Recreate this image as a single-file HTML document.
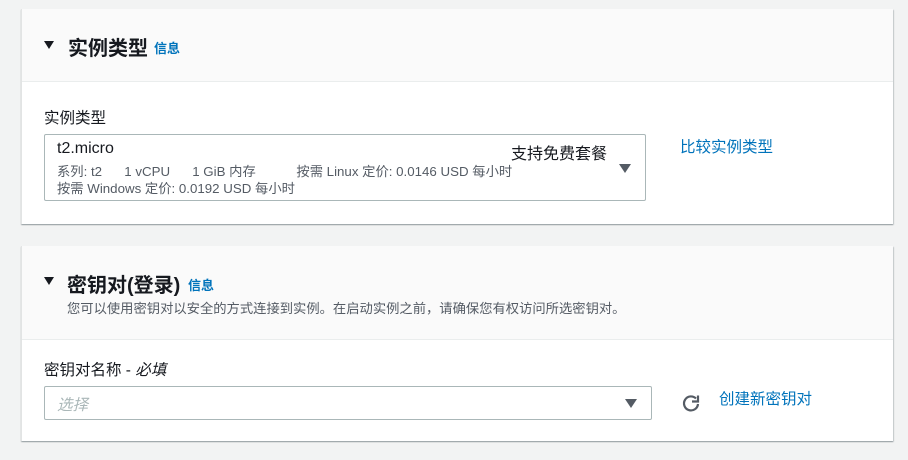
<!DOCTYPE html>
<html><head><meta charset="utf-8"><style>
body{margin:0;width:908px;height:460px;background:#f2f3f3;position:relative;overflow:hidden;font-family:"Liberation Sans","Noto Sans CJK SC",sans-serif;color:#16191f}
.card{position:absolute;left:21px;width:871px;background:#fff;border-left:1px solid #e2e4e4;box-shadow:0 1px 1px rgba(0,28,36,.3),1px 1px 1px rgba(0,28,36,.15)}
.hd{background:#fafafa;border-bottom:1px solid #eaeded;position:relative}
.a{position:absolute;white-space:nowrap}
.tri{width:0;height:0;border-left:5px solid transparent;border-right:5px solid transparent;border-top:8px solid #16191f}
.h{font-size:20px;font-weight:bold}
.info{font-size:13px;color:#0073bb;font-weight:bold}
.lnk{color:#0073bb;font-size:15.5px}
.box{position:absolute;border:1px solid #aab7b8;border-radius:2px;background:#fff}
.sm{font-size:13.3px;color:#545b64}
.dd{width:0;height:0;border-left:6px solid transparent;border-right:6px solid transparent;border-top:9px solid #545b64}
</style></head><body>
<div class="card" style="top:9px;height:215px">
 <div class="hd" style="height:72px">
  <div class="a tri" style="left:22px;top:32px"></div>
  <div class="a h" style="left:46px;top:23px">实例类型</div>
  <div class="a info" style="left:132px;top:29px">信息</div>
 </div>
 <div class="a" style="left:22px;top:97px;font-size:15.5px">实例类型</div>
 <div class="box" style="left:22px;top:125px;width:600px;height:65px">
  <div class="a" style="left:12px;top:5px;font-size:16px">t2.micro</div>
  <div class="a" style="left:466px;top:5px;font-size:16px">支持免费套餐</div>
  <div class="a sm" style="left:12px;top:26px">系列: t2&nbsp;&nbsp;&nbsp;&nbsp;&nbsp;&nbsp;1 vCPU&nbsp;&nbsp;&nbsp;&nbsp;&nbsp;&nbsp;1 GiB 内存&nbsp;&nbsp;&nbsp;&nbsp;&nbsp;&nbsp;&nbsp;&nbsp;&nbsp;&nbsp;&nbsp;按需 Linux 定价: 0.0146 USD 每小时</div>
  <div class="a sm" style="left:12px;top:43px">按需 Windows 定价: 0.0192 USD 每小时</div>
  <div class="a dd" style="left:574px;top:29px"></div>
 </div>
 <div class="a lnk" style="left:658px;top:126px">比较实例类型</div>
</div>
<div class="card" style="top:246px;height:195px">
 <div class="hd" style="height:93px">
  <div class="a tri" style="left:22px;top:31px"></div>
  <div class="a h" style="left:45px;top:23px">密钥对(登录)</div>
  <div class="a info" style="left:166px;top:29px">信息</div>
  <div class="a sm" style="left:45px;top:52px">您可以使用密钥对以安全的方式连接到实例。在启动实例之前，请确保您有权访问所选密钥对。</div>
 </div>
 <div class="a" style="left:22px;top:112px;font-size:15.5px">密钥对名称 - <i>必填</i></div>
 <div class="box" style="left:22px;top:140px;width:606px;height:32px">
  <div class="a" style="left:12px;top:6px;font-size:15.5px;color:#aab7b8;font-style:italic">选择</div>
  <div class="a dd" style="left:580px;top:12px"></div>
 </div>
 <svg class="a" style="left:659px;top:147px" width="20" height="20" viewBox="0 0 20 20"><path d="M15 5.5A7 7 0 1 0 17 11" fill="none" stroke="#545b64" stroke-width="2.2"/><path d="M11 4.5h6v-6" transform="translate(0,4)" fill="none" stroke="#545b64" stroke-width="2.2"/></svg>
 <div class="a lnk" style="left:697px;top:141px">创建新密钥对</div>
</div>
</body></html>
